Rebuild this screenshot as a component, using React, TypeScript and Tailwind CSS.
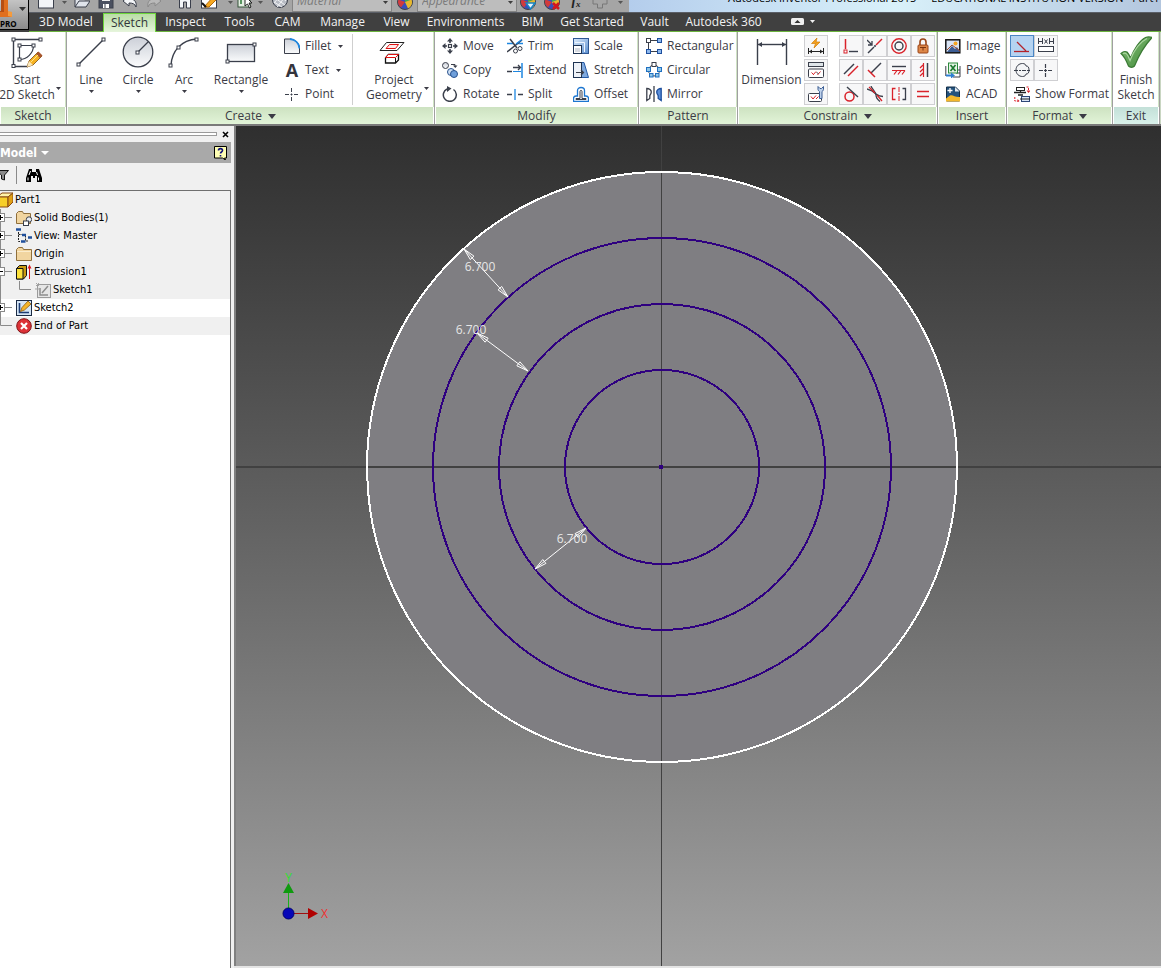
import { useState } from "react"
import type { ReactNode } from "react"

const INK = "#3a3f4b"
const RED = "#d9222a"
const BLUE = "#1f6fc0"

function Svg({ children, size = 16, className = "" }: { children: ReactNode; size?: number; className?: string }) {
  return (
    <svg
      width={size}
      height={size}
      viewBox={`0 0 ${size} ${size}`}
      fill="none"
      stroke={INK}
      aria-hidden="true"
      className={`shrink-0 ${className}`}
    >
      {children}
    </svg>
  )
}

function Caret({ className = "" }: { className?: string }) {
  return (
    <svg width="5" height="3" viewBox="0 0 5 3" aria-hidden="true" className={`shrink-0 ${className}`}>
      <path d="M0 0h5L2.5 3z" fill="currentColor" />
    </svg>
  )
}

function Handle({ x, y }: { x: number; y: number }) {
  return <rect x={x - 1.5} y={y - 1.5} width="3" height="3" fill="#fff" stroke={INK} />
}

/* ---------- large ribbon icons ---------- */

const Gradients = () => (
  <svg width="0" height="0" className="absolute" aria-hidden="true">
    <defs>
      <linearGradient id="steel" x1="0" y1="0" x2="0" y2="1">
        <stop offset="0" stopColor="#ccd0d8" />
        <stop offset="1" stopColor="#fafbfc" />
      </linearGradient>
      <linearGradient id="blueFill" x1="0" y1="0" x2="1" y2="1">
        <stop offset="0" stopColor="#dcebfa" />
        <stop offset="1" stopColor="#5b8fd0" />
      </linearGradient>
      <linearGradient id="check" x1="0" y1="0" x2="1" y2="1">
        <stop offset="0" stopColor="#86bd78" />
        <stop offset="1" stopColor="#3f8a38" />
      </linearGradient>
    </defs>
  </svg>
)

const big = {
  start: (
    <Svg size={32}>
      <path d="M30 3.5H2.5V30.500H17" strokeWidth="1.4" />
      <path d="M22.500 9.500H8.500V23.500C16 23.500 22.500 17 22.500 9.500z" strokeWidth="1.2" />
      <Handle x={29.5} y={3.5} />
      <Handle x={2.5} y={3.5} />
      <Handle x={2.5} y={30} />
      <Handle x={8.5} y={9.5} />
      <Handle x={22.5} y={9.5} />
      <Handle x={8.5} y={23.5} />
      <path d="M16 31l2-6 9-9 4 4-9 9z" fill="#f6b221" stroke="#7a4a10" strokeWidth=".8" />
      <path d="M25 18l2.500-2.500 4 4L29 22z" fill="#a7552c" stroke="none" />
      <path d="M16 31l2-6 4 4z" fill="#fbe8bd" stroke="none" />
      <path d="M20 26l7-7" stroke="#ffe58a" />
    </Svg>
  ),
  line: (
    <Svg size={32}>
      <path d="M4 28L28 4" strokeWidth="1.4" />
      <Handle x={3.5} y={28.5} />
      <Handle x={28.5} y={3.5} />
    </Svg>
  ),
  circle: (
    <Svg size={32}>
      <circle cx="16" cy="16" r="14.800" fill="url(#steel)" strokeWidth="1.300" />
      <path d="M16 16L26.500 5.500" strokeWidth="1.200" />
      <Handle x={15.5} y={16.5} />
    </Svg>
  ),
  arc: (
    <Svg size={32}>
      <path d="M3 29C4 15 13 4 29 3" strokeWidth="1.400" />
      <Handle x={2.5} y={29.5} />
      <Handle x={10.5} y={11.5} />
      <Handle x={28.5} y={3.5} />
    </Svg>
  ),
  rectangle: (
    <Svg size={32}>
      <rect x="2.500" y="8.500" width="27" height="17" fill="url(#steel)" strokeWidth="1.300" />
      <Handle x={29.5} y={8.5} />
      <Handle x={2.5} y={25.5} />
    </Svg>
  ),
  project: (
    <Svg size={32}>
      <path d="M8.500 6.500H26L19 14.500H2z" stroke="#222" fill="#fff" />
      <path d="M11.500 8.500h9l-3 4H8z" stroke="#e01212" fill="#ffe9e9" />
      <path d="M7.500 22l3-3.500H20.500V24l-3 3H7.500z" fill="#fff" stroke="#111" strokeWidth="1.300" />
      <path d="M7.500 21.500l3-3H20.500l-3 3z" stroke="#e01212" fill="#fff" />
      <path d="M17.500 22v5" stroke="#111" />
    </Svg>
  ),
  dimension: (
    <Svg size={32}>
      <path d="M1.500 3v26M30.500 3v26" strokeWidth="1.400" />
      <path d="M2 8.500h28" strokeWidth="1.400" />
      <path d="M2 8.500l4-2.500v5zM30 8.500l-4-2.500v5z" fill={INK} stroke="none" />
    </Svg>
  ),
  finish: (
    <Svg size={32}>
      <path
        d="M1 17.500c2-2 4-2.500 6-1.500 1.500 1.500 2.500 3.500 3.500 6C14 13 20 4 25.500 1.500c2-.8 4.500-.8 6.500 0C25 9 18.500 20 14.500 30c-1.500 1.700-4.500 1.700-6 0C6.500 25 4 20 1 17.500z"
        fill="url(#check)"
        stroke="#3a7a34"
        strokeWidth="1.200"
      />
      <path d="M3 17.500c2-1 3-.5 4 1 1.500 2 2 4 3 6C14 14 20 6 27 2.500" stroke="#abd6a0" strokeWidth="1.200" />
    </Svg>
  ),
}

/* ---------- small ribbon icons ---------- */

const icons = {
  fillet: (
    <Svg>
      <path d="M.5 15.500V1H6c5 .5 9 4 9.500 9v5.500z" fill="url(#steel)" />
      <path d="M6 1c5 .5 9 4 9.500 9.500" stroke="#1d86e0" strokeWidth="1.800" />
    </Svg>
  ),
  point: (
    <Svg>
      <path d="M7.500 2v4M7.500 11v4M1 8.500h4M10 8.500h4M6.500 8.500h2M7.500 7.500v2" />
    </Svg>
  ),
  move: (
    <Svg>
      <rect x="6.500" y="6.500" width="3" height="3" strokeWidth="1.200" />
      <path d="M8 0l3 3.500H5zM8 16l3-3.500H5zM0 8l3.500-3v6zM16 8l-3.500-3v6z" fill={INK} stroke="none" />
      <path d="M8 3v2M8 11v2M3 8h2M11 8h2" strokeWidth="1.600" />
    </Svg>
  ),
  copy: (
    <Svg>
      <circle cx="3.500" cy="3.500" r="3" fill="url(#steel)" />
      <circle cx="9" cy="10" r="3.500" fill="#cfe0f4" stroke="#29528e" />
      <circle cx="12" cy="12" r="3.500" fill="#6f9fda" stroke="#29528e" />
      <path d="M9 2.500h4V4" />
      <path d="M11 3.500h4.500l-2.200 2.500z" fill={INK} stroke="none" />
    </Svg>
  ),
  rotate: (
    <Svg>
      <path d="M11.500 3.500A6.500 6.500 0 1 1 5 3" strokeWidth="1.500" />
      <path d="M5 0l4.500 2.500L5 6z" fill={INK} stroke="none" />
    </Svg>
  ),
  trim: (
    <Svg>
      <path d="M0 5.500h6M10 5.500h6" stroke="#1d86e0" strokeWidth="1.600" />
      <path d="M3 1l7 9M0 14L15 2" strokeWidth="1.500" />
      <path d="M9 6l6-4.500" stroke="#1d86e0" strokeWidth="1.500" />
      <circle cx="8.500" cy="13" r="2" />
      <circle cx="13" cy="10.500" r="2" />
    </Svg>
  ),
  extend: (
    <Svg>
      <path d="M15 1v15" stroke="#1d86e0" strokeWidth="1.500" />
      <path d="M0 9.500h5M6 5.500h7M11 3l2.500 2.500L11 8" strokeWidth="1.300" />
      <path d="M6 9.500h8" stroke="#1d86e0" />
    </Svg>
  ),
  split: (
    <Svg>
      <path d="M0 8.500h5M11 8.500h5" strokeWidth="1.300" />
      <path d="M8 3v11" stroke="#1d86e0" strokeWidth="1.300" />
    </Svg>
  ),
  scale: (
    <Svg>
      <rect x=".5" y=".5" width="15" height="15" fill="url(#blueFill)" stroke="#2e5794" />
      <rect x=".5" y="7.500" width="8" height="8" fill="#fff" stroke="#1e3352" />
      <path d="M2 4.500h9.500V14" stroke="#eef5ff" />
      <rect x="2" y="10" width="5" height="4" fill="#d6dae1" stroke="none" />
    </Svg>
  ),
  stretch: (
    <Svg>
      <path d="M8 .5h3l4.500 15H8z" fill="#7fa9de" stroke="#2459a5" />
      <rect x=".5" y=".5" width="8" height="15" fill="#eef2f8" stroke="#1e3352" />
      <path d="M3 10.500h7M8 8l2.500 2.500L8 13" strokeWidth="1.200" />
    </Svg>
  ),
  offset: (
    <Svg>
      <path d="M.5 15.500v-3c0-1.500 1-2.500 2.500-2.500h1.500V4.500c0-4 7-4 7 0V10H13c1.500 0 2.500 1 2.500 2.500v3z" fill="#fff" stroke="#1d76d0" strokeWidth="1.300" />
      <path d="M3 13.500v-1h4V5.500c0-1.500 2-1.500 2 0v7h4v1z" />
    </Svg>
  ),
  rectangular: (
    <Svg>
      <path d="M5 2.500h6M2.500 5v6M5 13.500h6" />
      <rect x=".5" y=".5" width="4" height="4" fill="#fff" />
      <rect x="11.500" y=".5" width="4" height="4" fill="#8db8ee" stroke="#1d4f9e" />
      <rect x=".5" y="11.500" width="4" height="4" fill="#8db8ee" stroke="#1d4f9e" />
      <rect x="11.500" y="11.500" width="4" height="4" fill="#8db8ee" stroke="#1d4f9e" />
    </Svg>
  ),
  circular: (
    <Svg>
      <circle cx="8" cy="8.500" r="5.500" />
      <rect x="6" y=".5" width="4" height="4" fill="#fff" />
      <rect x=".5" y="5.500" width="4" height="4" fill="#8fc6e8" stroke={BLUE} />
      <rect x="11.500" y="5.500" width="4" height="4" fill="#8fc6e8" stroke={BLUE} />
      <rect x="3.500" y="11.500" width="3.500" height="3.500" fill="#8fc6e8" stroke={BLUE} />
      <rect x="9.500" y="11.500" width="3.500" height="3.500" fill="#8fc6e8" stroke={BLUE} />
    </Svg>
  ),
  mirror: (
    <Svg>
      <path d="M.8 14.500V2.500c2.500 0 4.500 1.500 4.500 3.500 0 1.500-.8 2.500-1.500 3.500v3z" fill="#fff" strokeWidth="1.300" />
      <path d="M15.200 14.500V2.500c-2.500 0-4.500 1.500-4.500 3.500 0 1.500.8 2.500 1.500 3.500v3z" fill="#5c8fda" stroke="#1d4f9e" strokeWidth="1.300" />
      <path d="M8 0v16" strokeWidth="1.300" />
    </Svg>
  ),
  image: (
    <Svg>
      <rect x=".8" y="1.800" width="14" height="13" fill="#d9e4f5" stroke="#111" strokeWidth="1.500" />
      <path d="M2 14l5-6 3 3 2-2 3 5z" fill="#3c5d94" stroke="none" />
      <path d="M2 12l5-5 8 6" stroke="#9c4a2b" />
      <circle cx="10.500" cy="5.500" r="2" fill="#f5a623" stroke="none" />
    </Svg>
  ),
  points: (
    <Svg>
      <path d="M.8 4v10M15 4v11H8M11 11h4M11 8h4" />
      <rect x="3.500" y="1" width="9" height="10" fill="#e7f4e7" stroke="#2c8a3c" />
      <path d="M5.500 3l5 6M10.500 3l-5 6" stroke="#1d7a30" strokeWidth="1.700" />
      <path d="M1 12.500h5v-2l4 3-4 3v-2H1z" fill="#2d7fd2" stroke="none" />
    </Svg>
  ),
  acad: (
    <Svg>
      <path d="M1.500 1h9l4 4v10h-13z" fill="#23527c" stroke="#122c46" />
      <path d="M10 1v4.500h4.500z" fill="#dfe7ef" stroke="none" />
      <path d="M1 15.500v-3l4-3c3-1 5 2 10 1.500v4.500z" fill="#f3b72b" stroke="none" />
      <path d="M5 2v5M2.500 4.500h5" stroke="#fff" strokeWidth="1.300" />
    </Svg>
  ),
  showFormat: (
    <Svg>
      <rect x="2.500" y="1.500" width="8" height="3" stroke="#222" />
      <path d="M0 6.500h12M6.500 4v3M4 9h5" stroke="#222" strokeWidth="1.300" />
      <rect x="7.500" y="10.500" width="8" height="5" fill="#dbe6f6" stroke="#2d4677" />
      <path d="M6 13h10" stroke="#222" />
      <path d="M12.500 1h2v4M.8 11v4h3" stroke={RED} strokeDasharray="2 1" />
      <path d="M12.500 4.500h4l-2 2.500zM3.500 13v3.500l2-1.500z" fill={RED} stroke="none" />
    </Svg>
  ),
  // dimension side column
  autoDim: (
    <Svg>
      <path d="M9 0L3.500 5.500h4L6 10l6-6H8z" fill="#f4a11d" stroke="#d07b08" strokeWidth=".7" />
      <path d="M.5 10v6M15.500 10v6M1 13.500h14" stroke="#222" />
      <path d="M1 13.500l3-2v4zM15 13.500l-3-2v4z" fill="#222" stroke="none" />
    </Svg>
  ),
  showConstraints: (
    <Svg>
      <rect x=".5" y=".5" width="15" height="4" fill="#dfe5e9" />
      <rect x=".5" y="7" width="15" height="8.500" rx="1" fill="#fff" />
      <path d="M3.500 10.500l2 2M8 9.500l-3 3.500M12.500 9.500l-3 3.500" stroke={RED} />
      <path d="M8.500 10l2 2" />
    </Svg>
  ),
  constraintSettings: (
    <Svg>
      <rect x=".5" y="7.500" width="13" height="8" rx="1" fill="#fff" />
      <path d="M3 10.500l2 2.500M8 9.500l-3 3.500M10.500 10.500L8 13" stroke={RED} />
      <path d="M10 .5v3c0 1 1.500 2 1.500 2v7h2.500v-7s1.500-1 1.500-2v-3l-2 2h-1.500z" fill="#bdd0ea" stroke="#3a5c92" />
    </Svg>
  ),
  // geometric constraints
  coincident: (
    <Svg>
      <path d="M2.500 1v10" stroke={RED} strokeWidth="1.500" />
      <rect x="1" y="12" width="3" height="3" stroke={RED} />
      <path d="M6 13.500h9" strokeWidth="1.400" />
    </Svg>
  ),
  collinear: (
    <Svg>
      <path d="M0 2l4.500 4.500M5 3v4H1" strokeWidth="1.300" />
      <path d="M1 15l6-6" strokeWidth="1.400" />
      <path d="M9 7l6-6" stroke={RED} strokeWidth="1.400" />
      <circle cx="8" cy="8" r="1" fill={INK} stroke="none" />
    </Svg>
  ),
  concentric: (
    <Svg>
      <circle cx="8" cy="8" r="7.200" stroke={RED} strokeWidth="1.400" />
      <circle cx="8" cy="8" r="4" strokeWidth="1.400" />
    </Svg>
  ),
  fix: (
    <Svg>
      <path d="M5 7V4c0-4 6-4 6 0v3" stroke="#9a4518" strokeWidth="1.600" />
      <rect x="3" y="7" width="10" height="8" rx="1" fill="#dd8748" stroke="#9a4518" />
      <path d="M8 9.500v3M5 9.500h6" stroke="#7a3310" />
    </Svg>
  ),
  parallel: (
    <Svg>
      <path d="M1 12L11 2" strokeWidth="1.500" />
      <path d="M5 14L15 4" stroke={RED} strokeWidth="1.500" />
    </Svg>
  ),
  perpendicular: (
    <Svg>
      <path d="M4 11L14 1" strokeWidth="1.500" />
      <path d="M1 8l7 7" stroke={RED} strokeWidth="1.500" />
    </Svg>
  ),
  horizontal: (
    <Svg>
      <path d="M1 4.500h14" strokeWidth="1.400" />
      <path d="M1 8.500h13M3 12.500l3-4M7 12.500l3-4M11 12.500l3-4" stroke={RED} strokeWidth="1.200" />
    </Svg>
  ),
  vertical: (
    <Svg>
      <path d="M12.500 1v14" strokeWidth="1.500" />
      <path d="M8.500 1v14M8 3L5 6M8 7l-3 3M8 11l-3 3" stroke={RED} strokeWidth="1.200" />
    </Svg>
  ),
  tangent: (
    <Svg>
      <circle cx="6.500" cy="10.500" r="4.500" stroke={RED} strokeWidth="1.500" />
      <path d="M4 1l11 10" strokeWidth="1.400" />
    </Svg>
  ),
  smooth: (
    <Svg>
      <path d="M4 0c1 3 5 6 5 9s2 5 4 6.500" strokeWidth="1.300" />
      <path d="M0 3c4 1 7 3 9 5 2 1.500 4 2.500 7 2.500" strokeWidth="1.300" />
      <path d="M2 1l6 6M10 9l5 6" stroke={RED} strokeWidth="1.300" />
    </Svg>
  ),
  symmetric: (
    <Svg>
      <path d="M4.500 2.500h-3v11h3" stroke={RED} strokeWidth="1.300" />
      <path d="M11.500 2.500h3v11h-3" strokeWidth="1.300" />
      <path d="M8 1v14" stroke={RED} strokeDasharray="5 1 2 1" />
    </Svg>
  ),
  equal: (
    <Svg>
      <path d="M2 5.500h12M2 10.500h12" stroke={RED} strokeWidth="1.400" />
    </Svg>
  ),
  // format toggles
  construction: (
    <Svg>
      <path d="M0 13.500h15" stroke="#b3222a" strokeWidth="1.300" />
      <path d="M3 4l9 9" stroke="#b3222a" strokeWidth="1.300" />
    </Svg>
  ),
  driven: (
    <Svg>
      <path d="M.5 0v6M4.500 0v6M1 3.500h3M11.500 0v6M15.500 0v6M12 3.500h3M6.500 1.500l3 4M9.500 1.500l-3 4" />
      <rect x=".5" y="8.500" width="15" height="5" fill="#fff" />
    </Svg>
  ),
  centerline: (
    <Svg>
      <path d="M2 8c0-4 3-6.500 6.500-6.500 2 0 3.500 1 3.500 2.500 2 0 3 1 3 4s-1 4-3 4c0 1.500-1.500 2.500-3.500 2.500C5 14.500 2 12 2 8z" fill="#f3f4f6" />
      <path d="M0 8.500h4M5 8.500h2M8 8.500h4M13 8.500h3" />
    </Svg>
  ),
  centerPoint: (
    <Svg>
      <path d="M7.500 2v4M7.500 11v4M1 8.500h4M10 8.500h4M6 8.500h3M7.500 7v3" strokeWidth="1.200" />
    </Svg>
  ),
}

/* ---------- ribbon building blocks ---------- */

function Tool({ icon, label, caret }: { icon: ReactNode; label: string; caret?: boolean }) {
  return (
    <button className="flex h-6 items-center gap-[5px] whitespace-nowrap">
      {icon}
      <span>{label}</span>
      {caret && <Caret className="ml-[2px]" />}
    </button>
  )
}

function BigTool({ icon, label, width, caret }: { icon: ReactNode; label: ReactNode; width: string; caret?: boolean }) {
  return (
    <button className={`flex shrink-0 flex-col items-center whitespace-nowrap pt-1 ${width}`}>
      {icon}
      <span className="mt-1 leading-[15px]">{label}</span>
      {caret && <Caret className="mt-[3px]" />}
    </button>
  )
}

function Cell({ icon, name, active }: { icon: ReactNode; name: string; active?: boolean }) {
  return (
    <button
      aria-label={name}
      className={`flex h-[22px] w-6 items-center justify-center border ${
        active ? "border-[#4a86c5] bg-[#b5d3f1]" : "border-[#cfcfd2] bg-[#f7f7f8]"
      }`}
    >
      {icon}
    </button>
  )
}

function Panel({ title, width, caret, exit, children }: { title: string; width: string; caret?: boolean; exit?: boolean; children: ReactNode }) {
  return (
    <section className={`flex shrink-0 flex-col border-r border-[#a0a0a0] ${width}`}>
      <div className="flex h-[75px] border-x border-[#cfe3c4] border-l-white bg-white">{children}</div>
      <h2
        className={`flex h-[17px] items-center justify-center gap-[6px] border-x border-white bg-linear-to-b pt-px ${
          exit ? "from-[#c3e0d8] to-[#d9f1ea]" : "from-[#cde2c1] to-[#e2f4d8]"
        }`}
      >
        {title}
        {caret && (
          <svg width="8" height="5" viewBox="0 0 8 5" aria-hidden="true">
            <path d="M0 0h8L4 5z" fill="currentColor" />
          </svg>
        )}
      </h2>
    </section>
  )
}

const constraints: [string, ReactNode][] = [
  ["Coincident", icons.coincident],
  ["Collinear", icons.collinear],
  ["Concentric", icons.concentric],
  ["Fix", icons.fix],
  ["Parallel", icons.parallel],
  ["Perpendicular", icons.perpendicular],
  ["Horizontal", icons.horizontal],
  ["Vertical", icons.vertical],
  ["Tangent", icons.tangent],
  ["Smooth", icons.smooth],
  ["Symmetric", icons.symmetric],
  ["Equal", icons.equal],
]

function Ribbon() {
  return (
    <div className="flex overflow-hidden bg-[#c9d6c2] text-[12px] text-[#3b3b45]">
      <Panel title="Sketch" width="w-[67px]">
        <button className="flex whitespace-nowrap pt-1">
          <span className="flex w-[52px] flex-col items-center">
            {big.start}
            <span className="mt-1 leading-[15px]">
              Start
              <br />
              2D Sketch
            </span>
          </span>
          <Caret className="mt-[51px] ml-[3px]" />
        </button>
      </Panel>

      <Panel title="Create" width="w-[368px]" caret>
        <BigTool icon={big.line} label="Line" width="w-[46px]" caret />
        <BigTool icon={big.circle} label="Circle" width="w-12" caret />
        <BigTool icon={big.arc} label="Arc" width="w-11" caret />
        <BigTool icon={big.rectangle} label="Rectangle" width="w-[70px]" caret />
        <div className="my-[2px] w-[77px] border-r border-[#cfcfcf] pl-2">
          <Tool icon={icons.fillet} label="Fillet" caret />
          <Tool
            icon={<span className="w-4 text-center text-[18px] font-bold text-[#33343c]">A</span>}
            label="Text"
            caret
          />
          <Tool icon={icons.point} label="Point" />
        </div>
        <button className="flex whitespace-nowrap pt-1 pl-[13px]">
          <span className="flex flex-col items-center">
            {big.project}
            <span className="mt-1 leading-[15px]">
              Project
              <br />
              Geometry
            </span>
          </span>
          <Caret className="mt-[51px] ml-[2px]" />
        </button>
      </Panel>

      <Panel title="Modify" width="w-[204px]">
        <div className="w-[65px] pt-[2px] pl-[6px]">
          <Tool icon={icons.move} label="Move" />
          <Tool icon={icons.copy} label="Copy" />
          <Tool icon={icons.rotate} label="Rotate" />
        </div>
        <div className="w-[66px] pt-[2px] pl-[6px]">
          <Tool icon={icons.trim} label="Trim" />
          <Tool icon={icons.extend} label="Extend" />
          <Tool icon={icons.split} label="Split" />
        </div>
        <div className="pt-[2px] pl-[6px]">
          <Tool icon={icons.scale} label="Scale" />
          <Tool icon={icons.stretch} label="Stretch" />
          <Tool icon={icons.offset} label="Offset" />
        </div>
      </Panel>

      <Panel title="Pattern" width="w-[99px]">
        <div className="pt-[2px] pl-[6px]">
          <Tool icon={icons.rectangular} label="Rectangular" />
          <Tool icon={icons.circular} label="Circular" />
          <Tool icon={icons.mirror} label="Mirror" />
        </div>
      </Panel>

      <Panel title="Constrain" width="w-[200px]" caret>
        <BigTool icon={big.dimension} label="Dimension" width="w-[65px]" />
        <div className="flex flex-col gap-[2px] pt-[3px]">
          <Cell name="Automatic dimensions" icon={icons.autoDim} />
          <Cell name="Show constraints" icon={icons.showConstraints} />
          <Cell name="Constraint settings" icon={icons.constraintSettings} />
        </div>
        <div className="ml-[11px] grid grid-cols-4 content-start gap-y-[2px] pt-[3px]">
          {constraints.map(([name, icon]) => (
            <Cell key={name} name={name} icon={icon} />
          ))}
        </div>
      </Panel>

      <Panel title="Insert" width="w-[69px]">
        <div className="pt-[2px] pl-[6px]">
          <Tool icon={icons.image} label="Image" />
          <Tool icon={icons.points} label="Points" />
          <Tool icon={icons.acad} label="ACAD" />
        </div>
      </Panel>

      <Panel title="Format" width="w-[106px]" caret>
        <div className="pt-[3px] pl-[2px]">
          <div className="grid w-12 grid-cols-2 gap-y-[2px]">
            <Cell name="Construction" icon={icons.construction} active />
            <Cell name="Driven dimension" icon={icons.driven} />
            <Cell name="Centerline" icon={icons.centerline} />
            <Cell name="Center point" icon={icons.centerPoint} />
          </div>
          <div className="pt-px pl-1">
            <Tool icon={icons.showFormat} label="Show Format" />
          </div>
        </div>
      </Panel>

      <Panel title="Exit" width="w-[47px]" exit>
        <BigTool
          icon={big.finish}
          label={
            <>
              Finish
              <br />
              Sketch
            </>
          }
          width="w-11"
        />
      </Panel>
    </div>
  )
}

/* ---------- title strip + tabs ---------- */

const tabs = [
  { name: "3D Model", width: "w-[74px]" },
  { name: "Sketch", width: "w-[53px]" },
  { name: "Inspect", width: "w-[59px]" },
  { name: "Tools", width: "w-[49px]" },
  { name: "CAM", width: "w-[47px]" },
  { name: "Manage", width: "w-[63px]" },
  { name: "View", width: "w-[45px]" },
  { name: "Environments", width: "w-[93px]" },
  { name: "BIM", width: "w-[41px]" },
  { name: "Get Started", width: "w-[78px]" },
  { name: "Vault", width: "w-[47px]" },
  { name: "Autodesk 360", width: "w-[91px]" },
]

const ColorBall = ({ children }: { children?: ReactNode }) => (
  <Svg>
    <circle cx="8" cy="8" r="7.500" fill="#3a4fb8" stroke="#444" />
    <path d="M8 8V1a7 7 0 0 1 6.500 4.500z" fill="#3fae49" stroke="none" />
    <path d="M8 8l6.500-2.500A7 7 0 0 1 11 14.500z" fill="#e8b92c" stroke="none" />
    <path d="M8 8L1.500 5.500A7 7 0 0 0 4 13.500z" fill="#d23b3b" stroke="none" />
    {children}
  </Svg>
)

const quick: { name: string; width: string; icon: ReactNode }[] = [
  { name: "New", width: "w-7", icon: <Svg><rect x=".5" y="-4" width="15" height="16" fill="#f2f4f7" /></Svg> },
  { name: "New options", width: "w-2 pb-2", icon: <Caret /> },
  { name: "Open", width: "w-7", icon: <Svg><path d="M1 11V1h5l2 2h5M1 11l4-6h11l-4 6z" fill="#dfe3ea" /></Svg> },
  { name: "Save", width: "w-5", icon: <Svg><rect x="1" y="0" width="14" height="12" fill="#4a5060" /><rect x="4" y="1" width="8" height="4" fill="#eee" stroke="none" /><rect x="5" y="8" width="6" height="4" fill="#fff" stroke="none" /><path d="M7 8v4" /></Svg> },
  { name: "Undo", width: "w-7", icon: <Svg><path d="M1 5l6-5v3c5 0 8 2 7 8-1-3-3-4-7-4v3z" fill="#f4f6f8" /></Svg> },
  { name: "Redo", width: "w-5", icon: <Svg><path d="M15 5L9 0v3C4 3 1 5 2 11c1-3 3-4 7-4v3z" fill="#b9b9b9" stroke="#8a8a8a" /></Svg> },
  { name: "Home", width: "ml-[9px] w-6", icon: <Svg><path d="M0 4l8-7 8 7M2.500 4v8h4V6h3v6h4V4" fill="#f4f6f8" /></Svg> },
  { name: "Sketch view", width: "w-6", icon: <Svg><rect x=".5" y="1" width="15" height="11" fill="#fff" /><path d="M3 11L13 0l3 3-8 8z" fill="#f6a821" stroke="#b26a0c" /><path d="M1 7l4 4" stroke="#111" strokeWidth="2" /></Svg> },
  { name: "Sketch options", width: "ml-[3px] w-3 pb-2", icon: <Caret /> },
  { name: "Select", width: "w-[18px]", icon: <Svg><rect x="1" y="-2" width="12" height="13" fill="#e3efe1" stroke="#36553a" /><path d="M4 8V2h4" stroke="#2c7a37" strokeWidth="1.500" /><path d="M8 0v10l2.500-2 2 4 1.500-1-2-4h3z" fill="#fff" stroke="#222" /></Svg> },
  { name: "Select options", width: "w-3 pb-2", icon: <Caret /> },
  { name: "Material browser", width: "ml-[2px] w-6", icon: <Svg><circle cx="8" cy="4" r="7.500" fill="#b8bcc4" /><path d="M3 2l10 7M2 6l8 5M6-2l8 7M13 1L5 11M9-1L2 7" stroke="#f1f2f4" /></Svg> },
]

function LookSelect({ name }: { name: string }) {
  return (
    <div className="relative w-[100px] shrink-0">
      <select
        aria-label={name}
        className="block h-[22px] w-full appearance-none border border-[#858585] bg-[#bdbdbd] px-1 text-[12px] italic text-[#7b7b7b]"
      >
        <option>{name}</option>
      </select>
      <Caret className="pointer-events-none absolute right-1 bottom-2 text-[#3d3d3d]" />
    </div>
  )
}

function QuickAccess() {
  return (
    <div className="flex h-3 w-[600px] shrink-0 items-end overflow-hidden bg-[#a5a5a5] pl-[3px] text-[#555]">
      {quick.map((q) => (
        <button key={q.name} aria-label={q.name} className={`flex shrink-0 justify-center ${q.width}`}>
          {q.icon}
        </button>
      ))}
      <LookSelect name="Material" />
      <button aria-label="Appearance browser" className="flex w-[25px] shrink-0 justify-center pb-[2px]">
        <ColorBall />
      </button>
      <LookSelect name="Appearance" />
      <button aria-label="Adjust" className="flex w-[22px] shrink-0 justify-center pb-[2px]">
        <ColorBall>
          <path d="M6 9h9l-4.500 6z" fill="#e8f7ff" stroke="#1782c4" strokeWidth="1.500" />
        </ColorBall>
      </button>
      <button aria-label="Clear" className="flex w-[26px] shrink-0 justify-center pb-[2px]">
        <ColorBall>
          <path d="M9 9l6 6M15 9l-6 6" stroke="#d2161e" strokeWidth="2.500" />
        </ColorBall>
      </button>
      <button className="w-[22px] shrink-0 pb-1 font-['Liberation_Serif',serif] text-[14px] leading-[14px] font-bold text-[#222] italic">
        f<sub className="text-[9px]">x</sub>
      </button>
      <button aria-label="Customize" className="flex w-[26px] shrink-0 justify-center">
        <Svg>
          <path d="M5.500-4v7H1v5h4.500v4h5V8H15V3h-4.500v-7" stroke="#777" />
        </Svg>
      </button>
      <button aria-label="More" className="flex w-[14px] shrink-0 justify-center pb-2">
        <Caret />
      </button>
    </div>
  )
}

function Header() {
  const [active, setActive] = useState("Sketch")
  return (
    <header className="flex bg-[#404040]">
      <button className="flex h-[30px] w-[29px] shrink-0 flex-col justify-end border-r border-b border-black bg-linear-to-b from-[#c4c4c4] to-[#8c8c8c] text-left">
        <svg width="28" height="18" viewBox="0 0 28 18" aria-hidden="true" className="shrink-0">
          <path d="M1 0h7v12h4v5H0v-5h1z" fill="#e06f1e" />
          <path d="M1 0h3v12H0v-1h1z" fill="#b64e12" />
          <path d="M8 11l4 1v5l-4-1z" fill="#f59b3c" />
          <path d="M19 7h7l-3.500 4z" fill="#333" />
        </svg>
        <span className="text-[8px] leading-[11px] font-bold text-black">PRO</span>
      </button>
      <div className="min-w-0 flex-1">
        <div className="flex border-b border-[#5a5e66]">
          <QuickAccess />
          <div className="h-3 min-w-0 flex-1 overflow-hidden bg-linear-to-r from-[#b4cdec] via-[#d9f1fa] to-[#b3c6de] pl-[99px]">
            <p className="-mt-[9px] text-[11px] leading-[14px] whitespace-nowrap text-black">
              Autodesk Inventor Professional 2015 &nbsp; - EDUCATIONAL INSTITUTION VERSION &nbsp; Part1
            </p>
          </div>
        </div>
        <nav className="flex h-[19px] items-stretch text-[12px] text-[#f2f2f2]">
          {tabs.map((tab) => (
            <button
              key={tab.name}
              onClick={() => setActive(tab.name)}
              className={`shrink-0 leading-[16px] whitespace-nowrap ${tab.width} ${
                active === tab.name
                  ? "border border-b-0 border-[#6cd63a] bg-linear-to-b from-[#b9dda6] to-[#e6f5dc] text-[#33363c]"
                  : "border-b border-[#6cb33f]"
              }`}
            >
              {tab.name}
            </button>
          ))}
          <button aria-label="Minimize ribbon" className="flex flex-1 items-center gap-[6px] border-b border-[#6cb33f] pb-px pl-[22px]">
            <svg width="13" height="7" viewBox="0 0 13 7" aria-hidden="true">
              <rect width="13" height="7" rx="1.500" fill="#eee" />
              <path d="M3.500 5h6l-3-3z" fill="#333" />
            </svg>
            <Caret />
          </button>
        </nav>
      </div>
    </header>
  )
}

/* ---------- browser tree ---------- */

const treeIcons = {
  part: (
    <Svg>
      <path d="M0 5l5-4h11l-5 4z" fill="#fff3a8" stroke="#8a4b12" />
      <path d="M0 5h11v10H0z" fill="#f7cf2a" stroke="#8a4b12" />
      <path d="M11 5l5-4v9l-5 5z" fill="#e0a014" stroke="#8a4b12" />
    </Svg>
  ),
  bodies: (
    <Svg>
      <path d="M.5 13.500V3.500l2-2h4l1 2h7v10z" fill="#f1d5a0" stroke="#8f6f3c" />
      <circle cx="13" cy="9.500" r="2.700" fill="#e9edf2" />
      <rect x="7.500" y="11" width="5" height="4.500" fill="#fff" />
    </Svg>
  ),
  view: (
    <Svg>
      <path d="M2.500 4v9.500H5M2.500 6.500H6M9.500 7.500V13H12" stroke="#222" strokeDasharray="2 1" />
      <path d="M0 1.500h5M6 7h4M5 13.500h4.500M12 9.500h4" stroke="#1f4f9c" strokeWidth="2.500" />
    </Svg>
  ),
  folder: (
    <Svg>
      <path d="M.5 14.500V3.500l2-2h4l1 2h8v11z" fill="#f1d5a0" stroke="#8f6f3c" />
      <path d="M1 5.500h14" stroke="#fbeccb" />
    </Svg>
  ),
  extrusion: (
    <Svg>
      <path d="M.5 4.500l3-3h7v10l-3 3.500h-7z" fill="#c99a10" stroke="#111" />
      <path d="M.5 4.500h6.500v10.500H.5z" fill="#fde23c" stroke="#111" />
      <path d="M13.500 15V3" stroke="#d8141c" />
      <path d="M11.500 4.500h4l-2-4z" fill="#d8141c" stroke="none" />
    </Svg>
  ),
  sketchGrey: (
    <Svg>
      <rect x="2.500" y="2.500" width="13" height="13" fill="#e6e6e6" stroke="#9b9b9b" />
      <path d="M5 6v7h8M7 11l6-7" stroke="#8d8d8d" strokeWidth="1.500" />
      <path d="M1 1l3 3M4 1L1 4M0 7h5" stroke="#a5a5a5" />
    </Svg>
  ),
  sketch: (
    <Svg>
      <rect x=".5" y=".5" width="15" height="15" fill="#d5e5f5" stroke="#1c2b44" />
      <path d="M3.500 3v9.500H13" stroke="#1d3c74" strokeWidth="1.600" />
      <path d="M4.500 11.500l1.500-4L12 1l3 3-6.500 6z" fill="#f5b52a" stroke="#8a5a12" strokeWidth=".8" />
    </Svg>
  ),
  end: (
    <Svg>
      <circle cx="8" cy="8" r="7.300" fill="#dc3237" stroke="#7f1518" />
      <path d="M5 5l6 6M11 5l-6 6" stroke="#fff" strokeWidth="2.200" />
    </Svg>
  ),
}

type Mark = "plus" | "minus" | "last"

const nodes: { label: string; icon: ReactNode; mark: Mark; nested?: boolean; selected?: boolean }[] = [
  { label: "Solid Bodies(1)", icon: treeIcons.bodies, mark: "plus" },
  { label: "View: Master", icon: treeIcons.view, mark: "plus" },
  { label: "Origin", icon: treeIcons.folder, mark: "plus" },
  { label: "Extrusion1", icon: treeIcons.extrusion, mark: "minus" },
  { label: "Sketch1", icon: treeIcons.sketchGrey, mark: "last", nested: true },
  { label: "Sketch2", icon: treeIcons.sketch, mark: "plus", selected: true },
  { label: "End of Part", icon: treeIcons.end, mark: "last" },
]

function Branch({ mark, nested }: { mark: Mark; nested?: boolean }) {
  const w = nested ? 35 : 16
  return (
    <svg width={w} height="18" viewBox={`0 0 ${w} 18`} fill="none" stroke="#8a8a8a" aria-hidden="true" className="shrink-0">
      {nested ? (
        <path d="M.5 0v18M19.500 0v8.500H31" />
      ) : mark === "last" ? (
        <path d="M.5 0v8.500H12" />
      ) : (
        <>
          <path d="M.5 0v18M4 8.500h8" />
          <rect x="-3.500" y="4.500" width="8" height="8" fill="#fff" />
          <path d={mark === "plus" ? "M-2 8.500h5M.5 6v5" : "M-2 8.500h5"} stroke="#000" />
        </>
      )}
    </svg>
  )
}

function ModelBrowser() {
  return (
    <aside className="flex w-[231px] shrink-0 flex-col bg-[#f0f0f0] font-['DejaVu_Sans_Condensed','DejaVu_Sans',sans-serif] text-[11px] text-black">
      <div className="flex h-4 items-center justify-between">
        <div className="h-1 w-[217px] border border-l-0 border-[#9a9a9a] bg-white" />
        <button aria-label="Close" className="flex h-3 w-3 items-center justify-center">
          <svg width="7" height="7" viewBox="0 0 7 7" aria-hidden="true">
            <path d="M1 1l5 5M6 1L1 6" stroke="#000" strokeWidth="1.600" />
          </svg>
        </button>
      </div>
      <div className="flex h-[21px] items-center justify-between bg-[#a9a9a9] pr-1 text-[12px] font-bold text-white">
        <button className="flex items-center gap-1">
          Model
          <svg width="8" height="4" viewBox="0 0 8 4" aria-hidden="true">
            <path d="M0 0h8L4 4z" fill="#fff" />
          </svg>
        </button>
        <button aria-label="Help" className="h-[14px] w-[13px]">
          <svg width="13" height="14" viewBox="0 0 13 14" fill="none" aria-hidden="true">
            <path d="M.5.5h12v11.500h-2l1 2-3-2h-8z" fill="#ffffb4" stroke="#000" />
            <path d="M4.500 4.500c0-2.500 4-2.500 4 0 0 1.500-2 1.500-2 3M6.500 9v1.500" stroke="#10107c" strokeWidth="1.600" />
          </svg>
        </button>
      </div>
      <div className="flex h-[27px] items-center pb-[3px]">
        <button aria-label="Filter" className="h-4 w-4">
          <Svg>
            <path d="M-4 3.500H8.500L4.500 8v5l-3-1V8z" fill="#8a8a8a" stroke="#111" />
          </Svg>
        </button>
        <div className="h-[18px] w-px bg-[#8a8a8a]" />
        <button aria-label="Find" className="ml-[9px] h-4 w-4">
          <Svg>
            <path d="M3 2h3v3h4V2h3l3 9v4h-5V9H9v2H7V9H5v6H0v-4z" fill="#000" stroke="none" />
            <path d="M2 10.500v3M12.500 10.500v3M4.500 4L3 8M10.500 5l1 3" stroke="#fff" />
          </Svg>
        </button>
      </div>
      <div className="min-h-0 flex-1 border-t border-r border-[#6f6f6f] bg-white">
        <ul>
          <li className="flex h-[18px] items-center gap-[2px] bg-[#f0f0f0]">
            <span className="-ml-[3px] flex">{treeIcons.part}</span>
            Part1
          </li>
          {nodes.map((n) => (
            <li key={n.label} className={`flex h-[18px] items-center whitespace-nowrap ${n.selected ? "bg-white" : "bg-[#f0f0f0]"}`}>
              <Branch mark={n.mark} nested={n.nested} />
              {n.icon}
              <span className="ml-[2px]">{n.label}</span>
            </li>
          ))}
        </ul>
      </div>
    </aside>
  )
}

/* ---------- sketch viewport ---------- */

type Pt = [number, number]

const dims: { from: Pt; to: Pt; label: Pt }[] = [
  { from: [464, 249], to: [508, 297], label: [480, 271] },
  { from: [477, 333], to: [528, 371], label: [471, 334] },
  { from: [586, 528], to: [535, 569], label: [572, 543] },
]

function arrow([x, y]: Pt, [tx, ty]: Pt) {
  const d = Math.hypot(tx - x, ty - y)
  const ux = (tx - x) / d
  const uy = (ty - y) / d
  const bx = x + ux * 12
  const by = y + uy * 12
  return `M${x} ${y}L${bx - uy * 2.5} ${by + ux * 2.5}L${bx + uy * 2.5} ${by - ux * 2.5}z`
}

function Viewport() {
  return (
    <main className="min-w-0 flex-1 border-l-2 border-[#808080] bg-linear-to-b from-[#2f2f2f] to-[#a2a2a2]">
      <svg viewBox="236 126 925 840" preserveAspectRatio="xMidYMid slice" className="block h-full w-full" fill="none">
        <circle cx="662" cy="467" r="295" fill="#7f7e82" />
        <path d="M0 467H1600" stroke="#414141" strokeWidth="2" />
        <path d="M661.500 0V1400" stroke="#414141" />
        <g shapeRendering="crispEdges" strokeWidth="2">
          <circle cx="662" cy="467" r="295" stroke="#fff" />
          <g stroke="#2f0080">
            <circle cx="662" cy="467" r="229" />
            <circle cx="662" cy="467" r="163" />
            <circle cx="662" cy="467" r="97" />
          </g>
        </g>
        <rect x="659" y="465" width="4" height="4" fill="#2f0080" />

        {dims.map(({ from, to, label }) => (
          <g key={label[1]}>
            <path d={`M${from}L${to}`} stroke="#fff" />
            <path d={arrow(from, to) + arrow(to, from)} stroke="#fff" />
            <text x={label[0]} y={label[1]} textAnchor="middle" fontSize="12" fill="#e6e6e6">
              6.700
            </text>
          </g>
        ))}

        {/* axis triad */}
        <path d="M288.500 913V893" stroke="#18b218" />
        <path d="M283 893h11l-5.500-10z" fill="#0f9a0f" />
        <path d="M288 913.500h21" stroke="#a01010" />
        <path d="M308 908v11l10-5.500z" fill="#b00000" />
        <circle cx="288.500" cy="913.500" r="5.500" fill="#0606b8" stroke="#000070" />
        <text x="288.500" y="882" textAnchor="middle" fontSize="12" fill="#2fe02f">Y</text>
        <text x="324.500" y="918" textAnchor="middle" fontSize="12" fill="#ee3030">X</text>
      </svg>
    </main>
  )
}

export default function App() {
  return (
    <div className="flex h-screen flex-col overflow-hidden bg-[#f0f0f0] font-['Open_Sans','Noto_Sans',sans-serif]">
      <Gradients />
      <Header />
      <Ribbon />
      <div className="flex min-h-0 flex-1 gap-[3px] border-t-2 border-[#7a7a7a]">
        <ModelBrowser />
        <div className="flex min-w-0 flex-1 border-b-2 border-[#e4e4e4]">
          <Viewport />
        </div>
      </div>
    </div>
  )
}
